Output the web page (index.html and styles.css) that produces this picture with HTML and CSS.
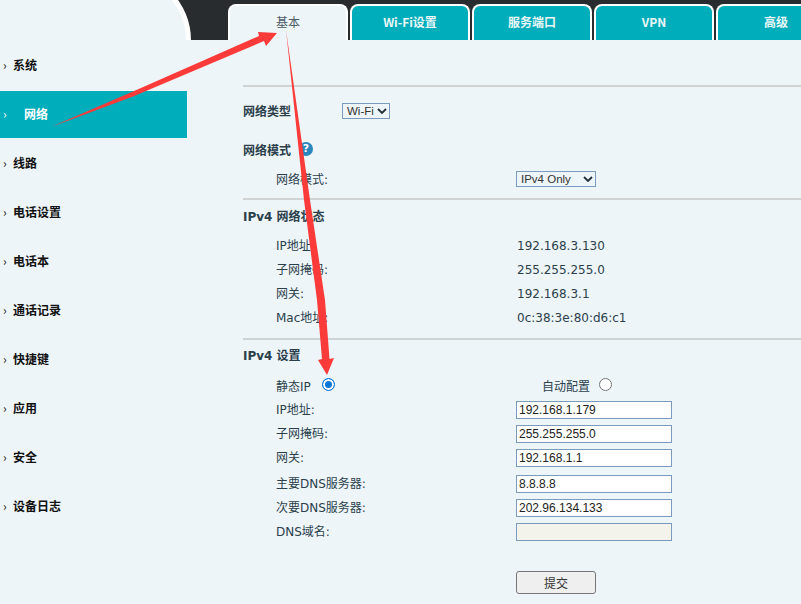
FILE: index.html
```html
<!DOCTYPE html>
<html lang="zh">
<head>
<meta charset="utf-8">
<title>网络</title>
<link rel="stylesheet" href="styles.css">
</head>
<body>
<div class="page">
  <header class="topbar">
    <div class="logo-area"></div>
    <nav class="tabs">
      <a class="tab active">基本</a>
      <a class="tab">Wi-Fi设置</a>
      <a class="tab">服务端口</a>
      <a class="tab">VPN</a>
      <a class="tab">高级</a>
    </nav>
  </header>
  <div class="body">
    <aside class="sidebar">
      <a class="nav"><span class="chev">›</span>系统</a>
      <a class="nav on"><span class="chev">›</span>网络</a>
      <a class="nav"><span class="chev">›</span>线路</a>
      <a class="nav"><span class="chev">›</span>电话设置</a>
      <a class="nav"><span class="chev">›</span>电话本</a>
      <a class="nav"><span class="chev">›</span>通话记录</a>
      <a class="nav"><span class="chev">›</span>快捷键</a>
      <a class="nav"><span class="chev">›</span>应用</a>
      <a class="nav"><span class="chev">›</span>安全</a>
      <a class="nav"><span class="chev">›</span>设备日志</a>
    </aside>
    <main class="content">
      <section class="sec sec-net">
        <div class="row-type"><b class="head">网络类型</b><span class="sel sel-wifi">Wi-Fi<svg class="caret" viewBox="0 0 10 6"><path d="M1 1l4 4 4-4"/></svg></span></div>
        <div class="row-mode"><b class="head">网络模式</b><span class="help">?</span></div>
        <div class="row"><span class="lbl">网络模式:</span><span class="sel sel-mode">IPv4 Only<svg class="caret" viewBox="0 0 10 6"><path d="M1 1l4 4 4-4"/></svg></span></div>
      </section>
      <section class="sec sec-status">
        <b class="head title">IPv4 网络状态</b>
        <div class="row r24"><span class="lbl">IP地址:</span><span class="val">192.168.3.130</span></div>
        <div class="row r24"><span class="lbl">子网掩码:</span><span class="val">255.255.255.0</span></div>
        <div class="row r24"><span class="lbl">网关:</span><span class="val">192.168.3.1</span></div>
        <div class="row r24"><span class="lbl">Mac地址:</span><span class="val">0c:38:3e:80:d6:c1</span></div>
      </section>
      <section class="sec sec-set">
        <b class="head title">IPv4 设置</b>
        <div class="row radios">
          <span class="lbl-radio">静态IP</span><span class="radio checked"></span>
          <span class="auto">自动配置</span><span class="radio"></span>
        </div>
        <div class="row r24"><span class="lbl">IP地址:</span><span class="inp">192.168.1.179</span></div>
        <div class="row r24"><span class="lbl">子网掩码:</span><span class="inp">255.255.255.0</span></div>
        <div class="row r24 gap"><span class="lbl">网关:</span><span class="inp">192.168.1.1</span></div>
        <div class="row r24"><span class="lbl">主要DNS服务器:</span><span class="inp">8.8.8.8</span></div>
        <div class="row r24"><span class="lbl">次要DNS服务器:</span><span class="inp">202.96.134.133</span></div>
        <div class="row r24"><span class="lbl">DNS域名:</span><span class="inp off"></span></div>
        <div class="row submit"><span class="lbl"></span><span class="btn">提交</span></div>
      </section>
    </main>
  </div>
  <svg class="arrows" viewBox="0 0 801 604" aria-hidden="true">
    <polygon points="51,127 133,91.5 259,36 258,32 277,33 266,46 264,41 133,96.5" class="a"/>
    <polygon points="286,30 304,200 317,300 322,359 318,360 327,375 334,358 329.5,359 325,300 310,200" class="a"/>
  </svg>
</div>
</body>
</html>
```
FILE: styles.css
```css
* { box-sizing: border-box; }
html, body { margin: 0; padding: 0; }
body { background: #eef5f8; font-family: "DejaVu Sans", "Noto Sans CJK SC", sans-serif; font-size: 12px; color: #2b3f4c; }
.page { position: relative; width: 801px; height: 604px; overflow: hidden; }

.topbar { height: 40px; background: #282c2f; display: flex; overflow: hidden; }
.logo-area { flex: none; width: 191px; height: 68px; margin-top: -28px; background: #eef5f8; border-right: 5px solid #fff; border-top: 5px solid #fff; border-top-right-radius: 68px; }
.tabs { flex: none; display: flex; gap: 2px; padding: 4px 0 0 37px; }
.tab { flex: none; width: 120px; height: 36px; background: #00adba; border: 2px solid #fff; border-bottom: 0; border-radius: 8px 8px 0 0; color: #eaf6f7; font-family: "Noto Sans CJK SC", sans-serif; font-weight: 700; font-size: 12px; text-align: center; line-height: 32px; }
.tab.active { background: #eef5f8; color: #4d5d66; font-weight: 400; }

.body { display: flex; }
.sidebar { width: 187px; padding-top: 2px; flex: none; }
.nav { display: block; height: 49px; line-height: 45px; color: #111; font-family: "Noto Sans CJK SC", sans-serif; font-weight: 700; font-size: 12px; padding-left: 3px; }
.nav .chev { display: inline-block; width: 10px; font-size: 12px; font-weight: 400; }
.nav.on { height: 47px; margin-bottom: 2px; background: #00adba; color: #fff; }
.nav.on .chev { width: 21px; }

.content { margin-left: 56px; width: 558px; padding-top: 45px; }
.sec { border-top: 2px solid #d0d3d4; }
.sec-net { height: 113px; padding-top: 14px; }
.sec-status { height: 140px; padding-top: 8px; }
.sec-set { padding-top: 7px; }
.head { display: block; font-weight: 700; font-size: 12px; color: #2b3f4c; }
.title { height: 18px; line-height: 18px; }
.row-type { display: flex; align-items: center; height: 20px; }
.row-type .head { width: 99px; margin-top: -2px; }
.row-mode { display: flex; align-items: center; height: 20px; margin-top: 19px; }
.row-mode .head { margin-top: -2px; }
.help { width: 14px; height: 14px; margin-left: 8px; margin-top: -2px; border-radius: 50%; background: #2a86bd; color: #fff; font-size: 11px; font-weight: 700; text-align: center; line-height: 14px; }

.row { display: flex; align-items: center; padding-left: 33px; }
.sec-net .row { margin-top: 9px; height: 20px; }
.r24 { height: 24px; }
.lbl { width: 240px; flex: none; margin-top: -4px; }
.sec-net .lbl { margin-top: -2px; }
.sec-status .lbl { width: 241px; }
.sec-status .title { margin-bottom: 8px; }
.sel { display: flex; align-items: center; height: 16px; background: #eef5f8; border: 1px solid #7a9bbd; font-family: "Liberation Sans", sans-serif; color: #333; font-size: 11.5px; padding-left: 4px; }
.sel-wifi { width: 48px; }
.sel-mode { width: 80px; }
.caret { width: 10px; height: 6px; margin-left: auto; margin-right: 2px; fill: none; stroke: #22303a; stroke-width: 1.8; }

.radios { height: 25px; margin-top: 8px; }
.lbl-radio { width: 46px; }
.auto { margin-left: 207px; width: 57px; }
.radio { width: 13px; height: 13px; margin-top: -2px; border: 1px solid #767676; border-radius: 50%; background: #fff; }
.radio.checked { border: 1.5px solid #0a76d6; background: #0a76d6; box-shadow: inset 0 0 0 2px #fff; }
.inp { display: block; width: 156px; height: 18px; background: #fff; border: 1px solid #7a9bbd; font-family: "Liberation Sans", sans-serif; font-size: 12px; line-height: 16px; padding-left: 2px; color: #222; }
.inp.off { background: #f3f3ec; }
.gap { margin-bottom: 2px; }
.submit { margin-top: 27px; }
.btn { width: 80px; height: 23px; border: 1px solid #767676; border-radius: 3px; background: #efefef; color: #333; text-align: center; font-family: "Noto Sans CJK SC", sans-serif; line-height: 21px; }

.arrows { position: absolute; left: 0; top: 0; width: 801px; height: 604px; pointer-events: none; }
.a { fill: #fb3a3a; }
```
